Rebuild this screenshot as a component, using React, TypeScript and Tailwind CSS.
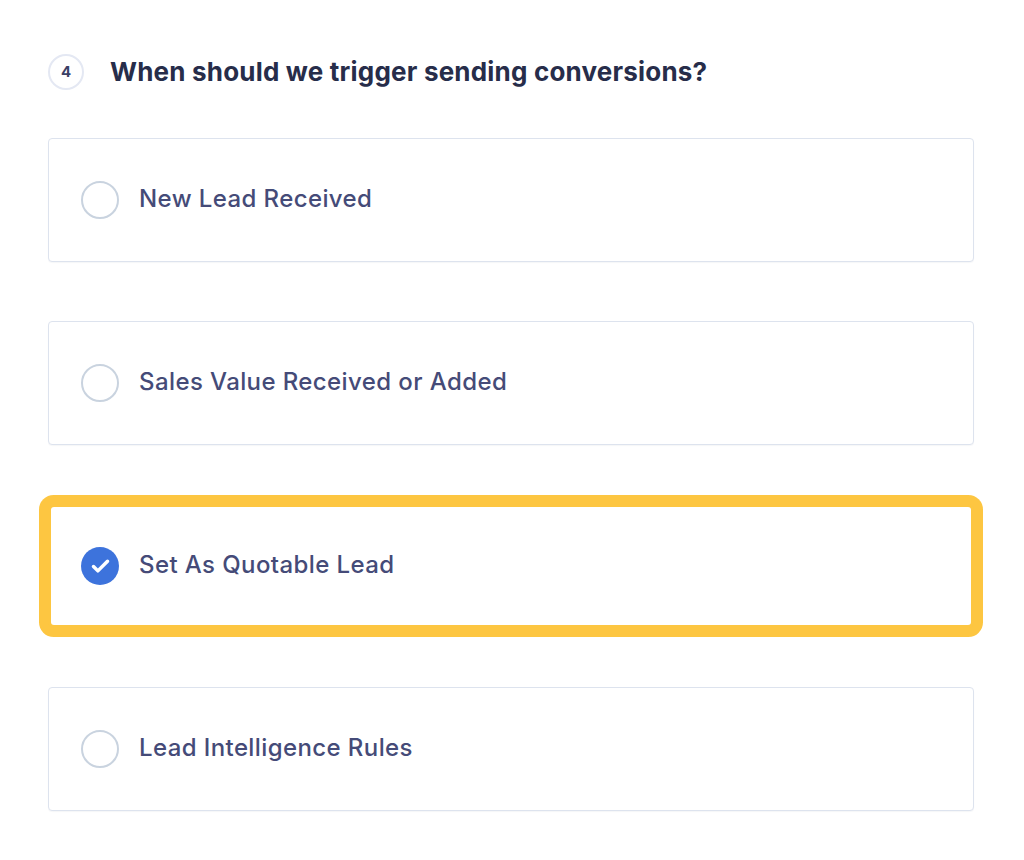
import { Check } from 'lucide-react'

const options = [
  { id: 'new_lead', label: 'New Lead Received', checked: false },
  { id: 'sales_value', label: 'Sales Value Received or Added', checked: false },
  { id: 'quotable', label: 'Set As Quotable Lead', checked: true },
  { id: 'intelligence', label: 'Lead Intelligence Rules', checked: false },
]

export default function App() {
  return (
    <div className="min-h-[860px] bg-white font-['Inter',sans-serif]">
      <div className="pl-[48px] pr-[50px] pt-[54px]">
        {/* Step header */}
        <div className="flex items-center gap-[26px]">
          <div className="w-[36px] h-[36px] rounded-full border-2 border-[#e4e8f3] flex items-center justify-center text-[15px] font-bold text-[#3a4066]">
            4
          </div>
          <h2 className="text-[26px] leading-[36px] font-bold text-[#272d4a] tracking-[0.2px]">
            When should we trigger sending conversions?
          </h2>
        </div>

        {/* Options */}
        <div className="mt-[48px] flex flex-col gap-[59px]">
          {options.map((opt) => (
            <div
              key={opt.id}
              className={
                opt.checked
                  ? 'h-[124px] flex items-center px-[30px] bg-white rounded-[6px] border-[3px] border-[#fdc641] ring-[9px] ring-[#fdc641]'
                  : 'h-[124px] flex items-center px-[32px] bg-white rounded-[4px] border border-[#dde3ee] shadow-[0_1px_1px_rgba(30,40,80,0.04)]'
              }
            >
              {opt.checked ? (
                <div className="w-[38px] h-[38px] rounded-full bg-[#3d73dc] flex items-center justify-center">
                  <Check size={21} strokeWidth={4} className="text-white" />
                </div>
              ) : (
                <div className="w-[38px] h-[38px] rounded-full border-2 border-[#c9d3df]" />
              )}
              <span className="ml-[20px] mb-[3px] text-[24px] leading-[32px] font-medium text-[#454b78] tracking-[0.4px]">
                {opt.label}
              </span>
            </div>
          ))}
        </div>
      </div>
    </div>
  )
}
